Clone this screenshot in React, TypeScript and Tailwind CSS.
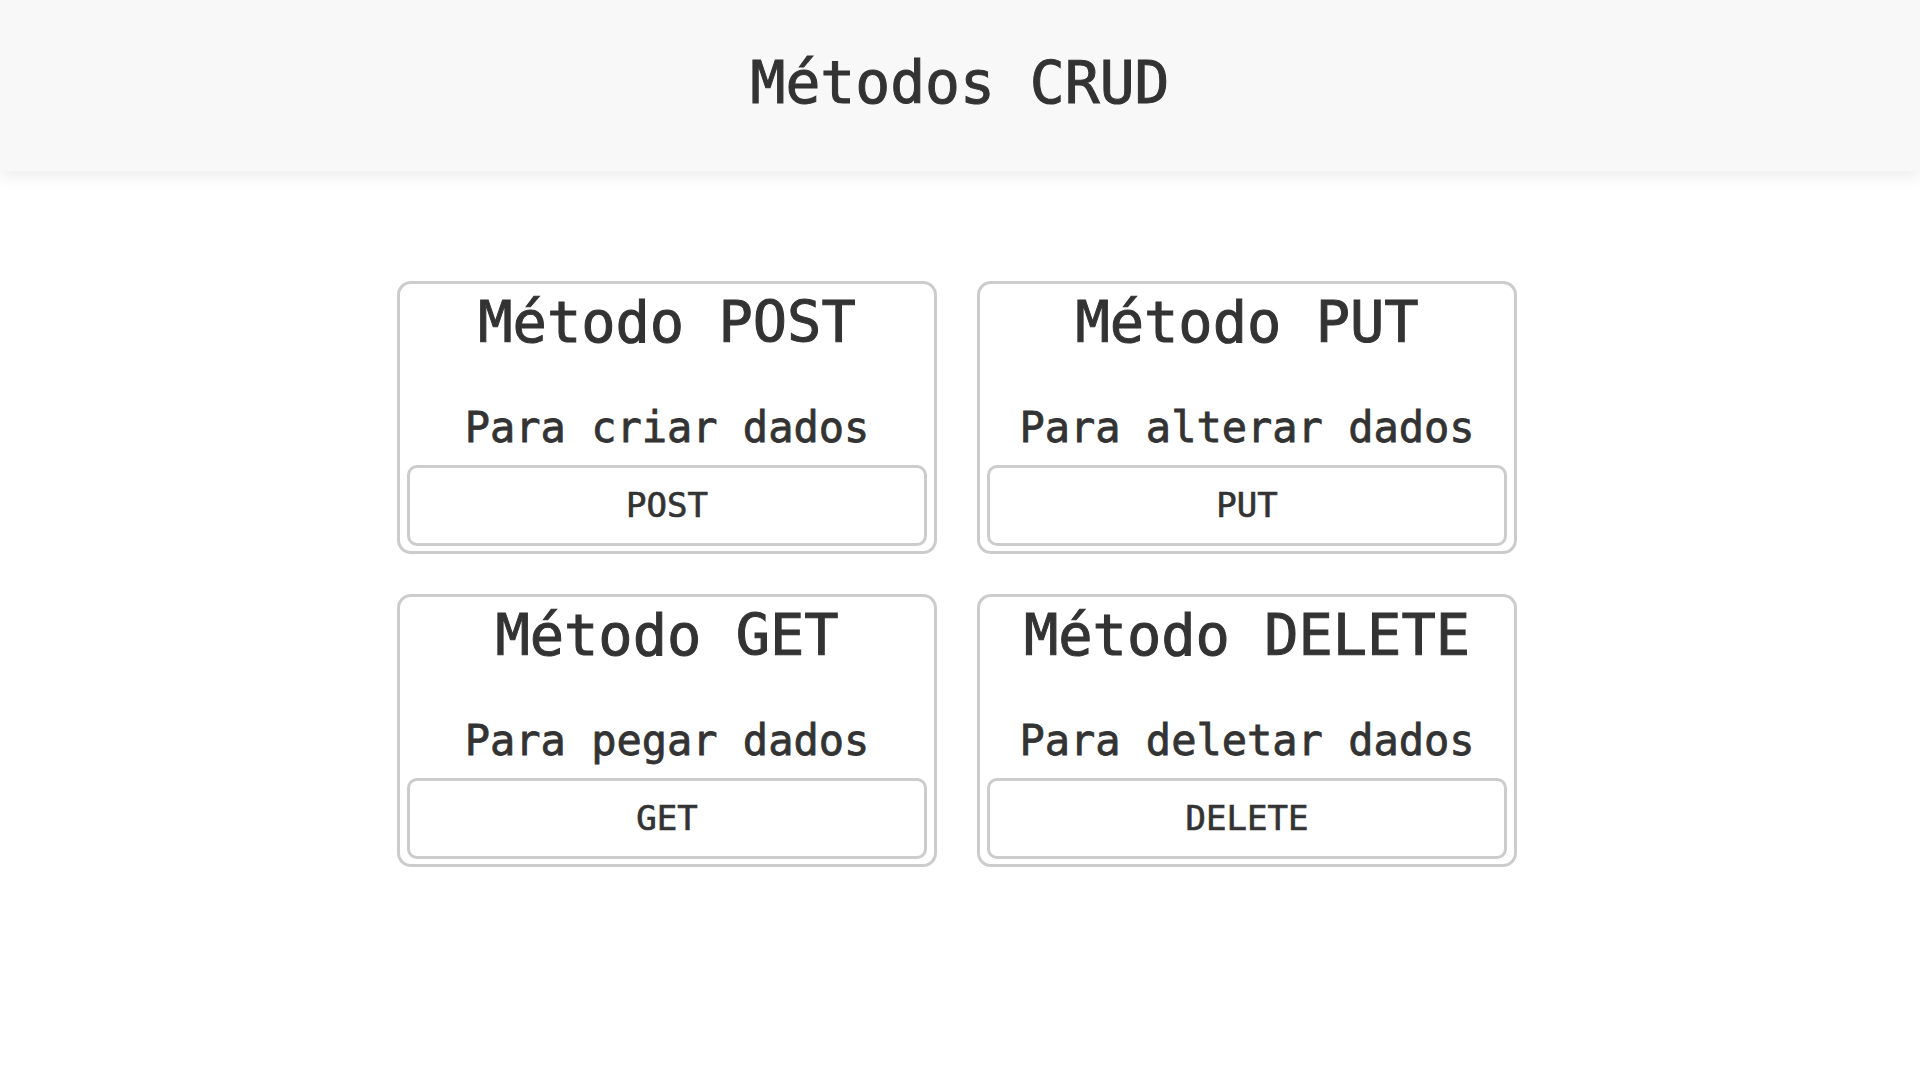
import React from 'react'

const methods = [
    { name: 'POST', text: 'Para criar dados' },
    { name: 'PUT', text: 'Para alterar dados' },
    { name: 'GET', text: 'Para pegar dados' },
    { name: 'DELETE', text: 'Para deletar dados' },
]

const MethodCard = ({ name, text }: { name: string; text: string }) => {
    return (
        <div className="flex h-[273px] w-[540px] flex-col items-center rounded-[14px] border-[3px] border-[#cccccc] bg-white px-[7px] pb-[5px]">
            <h2 className="mt-[6px] text-[57px] leading-[64px] text-[#333333] [-webkit-text-stroke:1px_#333333]">Método {name}</h2>
            <p className="mt-[50px] text-[42px] leading-[48px] text-[#333333] [-webkit-text-stroke:0.8px_#333333]">{text}</p>
            <button className="mt-auto flex h-[81px] w-full items-center justify-center rounded-[10px] border-[3px] border-[#cccccc] bg-white text-[34px] text-[#333333] [-webkit-text-stroke:0.7px_#333333]">
                {name}
            </button>
        </div>
    )
}

const App = () => {
    return (
        <div className="min-h-screen bg-white font-['DejaVu_Sans_Mono','Liberation_Mono',monospace]">
            <header className="flex h-[171px] items-center justify-center bg-[#f8f8f8] pb-[5px] shadow-[0_6px_14px_rgba(0,0,0,0.07)]">
                <h1 className="text-[58px] leading-none text-[#333333] [-webkit-text-stroke:1px_#333333]">Métodos CRUD</h1>
            </header>
            <main className="mt-[110px] flex justify-center pr-[6px]">
                <div className="grid grid-cols-2 gap-x-[40px] gap-y-[40px]">
                    {methods.map((m) => (
                        <MethodCard key={m.name} name={m.name} text={m.text} />
                    ))}
                </div>
            </main>
        </div>
    )
}

export default App
